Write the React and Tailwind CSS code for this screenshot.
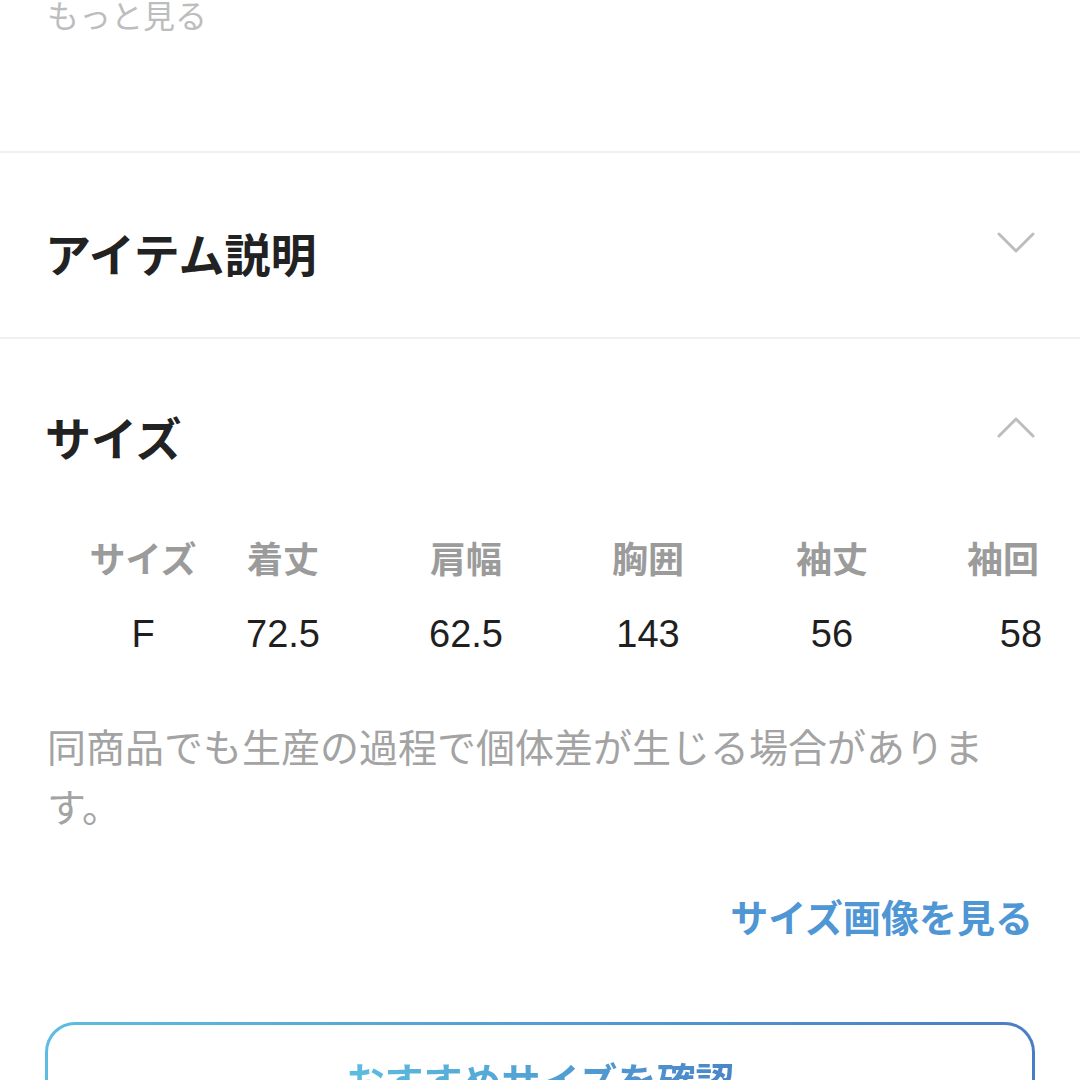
import React from "react";

const jp = { fontFamily: '"Noto Sans CJK JP", "Noto Sans", sans-serif' };
const num = { fontFamily: '"Liberation Sans", Arial, sans-serif' };

function Chevron({ up }) {
  return (
    <svg width="40" height="24" viewBox="0 0 40 24" fill="none">
      <path
        d={up ? "M3 21 L20 4 L37 21" : "M3 3 L20 20 L37 3"}
        stroke="#bdbdbd"
        strokeWidth="3"
        strokeLinecap="round"
        strokeLinejoin="round"
      />
    </svg>
  );
}

const cols = [
  { h: "サイズ", v: "F", w: "w-[120px]" },
  { h: "着丈", v: "72.5", w: "w-[160px]" },
  { h: "肩幅", v: "62.5", w: "w-[206px]" },
  { h: "胸囲", v: "143", w: "w-[158px]" },
  { h: "袖丈", v: "56", w: "w-[210px]" },
  { h: "袖回り", v: "58", w: "w-[168px]" },
];

export default function App() {
  return (
    <div className="w-[1080px] h-[1080px] overflow-hidden bg-white" style={jp}>
      <div className="px-[47px] -mt-[10px] text-[32px] leading-[48px] text-[#bdbdbd]">もっと見る</div>
      <div className="mt-[113px] h-[2px] bg-[#f0f0f0]" />

      <div className="pl-[45px] pr-[47px] pt-[72px] pb-[58px] flex justify-between items-start">
        <div className="text-[46px] leading-[54px] font-bold text-[#222]">アイテム説明</div>
        <div className="mt-[6px] mr-[-3px]"><Chevron /></div>
      </div>
      <div className="h-[2px] bg-[#f0f0f0]" />

      <div className="pl-[45px] pr-[47px] pt-[70px] flex justify-between items-start">
        <div className="text-[46px] leading-[54px] font-bold text-[#222]">サイズ</div>
        <div className="mt-[6px] mr-[-3px]"><Chevron up /></div>
      </div>

      <div className="ml-[83px] w-[960px] overflow-hidden mt-[70px]">
        <div className="flex w-max">
          {cols.map((c) => (
            <div key={c.h} className={`${c.w} shrink-0 flex flex-col items-center`}>
              <div className="text-[36px] leading-[48px] font-bold text-[#9b9b9b] whitespace-nowrap">{c.h}</div>
              <div className="mt-[28px] text-[38px] leading-[50px] text-[#1f1f1f]" style={num}>{c.v}</div>
            </div>
          ))}
        </div>
      </div>

      <p className="px-[47px] mt-[56px] text-[39px] leading-[60px] text-[#a3a3a3]">
        同商品でも生産の過程で個体差が生じる場合があります。
      </p>

      <div className="px-[47px] mt-[56px] flex justify-end">
        <span className="text-[38px] leading-[50px] font-bold text-[#4f96d4]">サイズ画像を見る</span>
      </div>

      <div className="mx-[45px] mt-[81px] rounded-[30px] p-[3px] bg-linear-to-r from-[#5cbde0] to-[#4a7ec4]">
        <div className="h-[108px] rounded-[27px] bg-white flex items-center justify-center">
          <span className="text-[39px] leading-[50px] font-bold bg-linear-to-r from-[#5cbde0] to-[#4a86c8] bg-clip-text text-transparent">
            おすすめサイズを確認
          </span>
        </div>
      </div>
    </div>
  );
}
